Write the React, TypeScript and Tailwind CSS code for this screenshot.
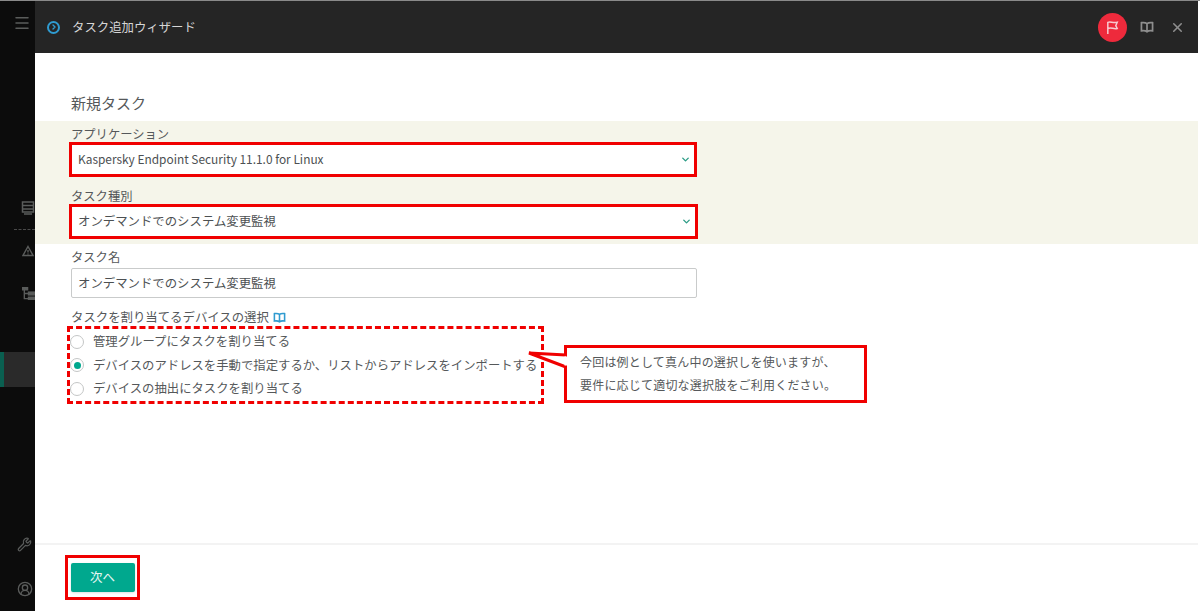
import type { JSX } from 'react';
import { ChevronDown, Menu, Wrench, X, ChevronRight, CircleUserRound } from 'lucide-react';

const FONT = "font-['Noto_Sans_CJK_JP','Noto_Sans',sans-serif]";

function BookIcon({ className }: { className: string }): JSX.Element {
  return (
    <svg viewBox="0 0 16 14" className={className} fill="none" stroke="currentColor" strokeWidth="2">
      <path d="M8 3C6.500 1.800 4 1.600 1.500 2v9.500c2.500-.4 5-.2 6.500 1 1.500-1.200 4-1.400 6.500-1V2C12 1.600 9.500 1.800 8 3zM8 3v9" />
    </svg>
  );
}

function FlagIcon(): JSX.Element {
  return (
    <svg viewBox="0 0 16 16" className="w-[15px] h-[15px] text-[#f7c9cf]" fill="none" stroke="currentColor" strokeWidth="1.600">
      <path d="M3 15V2.500c3-1.500 4.500 1 10 0l-1.500 3.500L13 9c-4 1-6-1.500-10 0" />
    </svg>
  );
}

function PanelIcon(): JSX.Element {
  return (
    <svg viewBox="0 0 14 14" className="w-[14px] h-[14px] ml-[21px] mt-[169px]" fill="none" stroke="currentColor" strokeWidth="1.500">
      <rect x="1.500" y="1" width="11" height="10" />
      <path d="M1.500 4.500h11M1.500 8h11M3 13h8" />
    </svg>
  );
}

function WarnIcon(): JSX.Element {
  return (
    <svg viewBox="0 0 12 12" className="w-[12px] h-[12px] ml-[22px] mt-[15px]" fill="none" stroke="currentColor" strokeWidth="1.400">
      <path d="M6 1.500L11 10.500H1z" />
      <path d="M6 5v2.500M6 8.500v1" />
    </svg>
  );
}

function TreeIcon(): JSX.Element {
  return (
    <svg viewBox="0 0 14 14" className="w-[13px] h-[13px] ml-[22px] mt-[30px]" fill="none" stroke="currentColor" strokeWidth="1.500">
      <rect x="0" y="0.500" width="6" height="2.500" fill="currentColor" />
      <path d="M2.500 3v9.500h4M2.500 7h4" />
      <rect x="7" y="5.500" width="7" height="3" fill="currentColor" />
      <rect x="7" y="11" width="7" height="3" fill="currentColor" />
    </svg>
  );
}

function Radio({ checked, label }: { checked?: boolean; label: string }): JSX.Element {
  return (
    <label className="flex items-center h-[23.500px] whitespace-nowrap text-[12.370px] text-[#55585a]">
      <span className="flex items-center justify-center w-[14px] h-[14px] shrink-0 rounded-full border border-[#c4c6c6] bg-white mr-[9px]">
        {checked && <span className="w-[7px] h-[7px] rounded-full bg-[#00a88e]" />}
      </span>
      {label}
    </label>
  );
}

function SelectField({ value, className }: { value: string; className: string }): JSX.Element {
  return (
    <div className={`flex items-center justify-between h-[35px] ml-[-2px] border-[3px] border-[#f00000] bg-white pl-[6px] pr-[3px] text-[#4c5052] ${className}`}>
      <span>{value}</span>
      <ChevronDown className="w-[11px] h-[11px] text-[#2c9c86]" strokeWidth={3} />
    </div>
  );
}

export default function App(): JSX.Element {
  return (
    <div className={`${FONT} w-[1200px] h-[611px] flex overflow-hidden bg-white border-t border-[#8a8a8a]`}>
      <aside className="w-[35px] h-full shrink-0 flex flex-col overflow-hidden bg-[#0c0c0c] text-[#5a5c5b]">
        <Menu className="w-[18px] h-[18px] mt-[13px] ml-[13px]" strokeWidth={2} />
        <PanelIcon />
        <div className="w-[21px] ml-[14px] border-t border-dashed border-[#4a4a4a] mt-[14px]" />
        <WarnIcon />
        <TreeIcon />
        <div className="w-[35px] h-[35px] mt-[52px] bg-[#2a2a2a] border-l-[4px] border-[#0a5f50]" />
        <Wrench className="w-[15px] h-[15px] mt-[150px] ml-[17px]" />
        <CircleUserRound className="w-[16px] h-[16px] mt-[29px] ml-[17px]" />
      </aside>

      <div className="relative flex-1 min-w-0 flex flex-col mr-[2px]">
        <header className="h-[52px] shrink-0 flex items-center bg-[#252525] pl-[12px] pr-[13px]">
          <span className="flex items-center justify-center w-[13px] h-[13px] rounded-full border-2 border-[#2f9bd0]">
            <ChevronRight className="w-[8px] h-[8px] text-[#2f9bd0]" strokeWidth={4} />
          </span>
          <h1 className="ml-[12px] text-[12.400px] text-[#d6d6d6]">タスク追加ウィザード</h1>
          <span className="ml-auto flex items-center justify-center w-[29px] h-[29px] rounded-full bg-[#ee2a3c]">
            <FlagIcon />
          </span>
          <BookIcon className="w-[14px] h-[12px] ml-[13px] text-[#8e8e8e]" />
          <X className="w-[15px] h-[15px] ml-[16px] text-[#8e8e8e]" strokeWidth={2.500} />
        </header>

        <main className="flex-1 flex flex-col">
          <h2 className="mt-[39px] ml-[36px] h-[29px] text-[15px] leading-[22px] text-[#55585a]">新規タスク</h2>

          <section className="bg-[#f5f5ea] h-[123px] pl-[36px] text-[#55585a]">
            <div className="h-[21px] pt-[3px] text-[12.300px] leading-[20px]">アプリケーション</div>
            <SelectField value="Kaspersky Endpoint Security 11.1.0 for Linux" className="w-[628px] text-[11.900px] pb-[1px]" />
            <div className="h-[27px] pt-[9px] text-[12.300px] leading-[20px]">タスク種別</div>
            <SelectField value="オンデマンドでのシステム変更監視" className="w-[629px] text-[12.400px]" />
          </section>

          <section className="pl-[36px]">
            <div className="pt-[3px] h-[24px] text-[12.300px] leading-[20px] text-[#55585a]">タスク名</div>
            <div className="flex items-center w-[626px] h-[30px] rounded-[2px] border border-[#c9cbcb] pl-[6px] text-[12.400px] text-[#4c5052]">
              オンデマンドでのシステム変更監視
            </div>
            <div className="flex items-center gap-[4px] mt-[10px] h-[18px] text-[12.400px] text-[#55585a]">
              タスクを割り当てるデバイスの選択
              <BookIcon className="w-[13px] h-[11px] text-[#2f9bd0]" />
            </div>
            <div className="w-[477px] h-[78px] ml-[-4px] border-[3px] border-dashed border-[#f00000] pt-[1px]">
              <Radio label="管理グループにタスクを割り当てる" />
              <Radio checked label="デバイスのアドレスを手動で指定するか、リストからアドレスをインポートする" />
              <Radio label="デバイスの抽出にタスクを割り当てる" />
            </div>
          </section>

          <footer className="mt-auto h-[68px] border-t-[2px] border-[#f3f3f3] pl-[30px] pt-[10px]">
            <div className="flex items-center justify-center w-[75px] h-[45px] border-[3px] border-[#f00000]">
              <button type="button" className="w-[64px] h-[29px] rounded-[2px] bg-[#00a88e] text-[12.500px] text-[#e6f7f3] shadow-sm">
                次へ
              </button>
            </div>
          </footer>
        </main>

        <div className="absolute left-[529px] top-[344px] w-[303px] h-[58px] border-[3px] border-[#f00000] bg-white pl-[13px] pt-[2px] text-[12px] leading-[23px] tracking-[0.2px] text-[#55585a]">
          <p>今回は例として真ん中の選択しを使いますが、</p>
          <p>要件に応じて適切な選択肢をご利用ください。</p>
        </div>
        <svg viewBox="0 0 40 26" className="absolute left-[493px] top-[348px] w-[40px] h-[26px]" fill="white">
          <path d="M38 6L1 4L38 18" stroke="#f00000" strokeWidth="3" />
          <rect x="36.500" y="7.500" width="3.500" height="9" stroke="none" />
        </svg>
      </div>
    </div>
  );
}
